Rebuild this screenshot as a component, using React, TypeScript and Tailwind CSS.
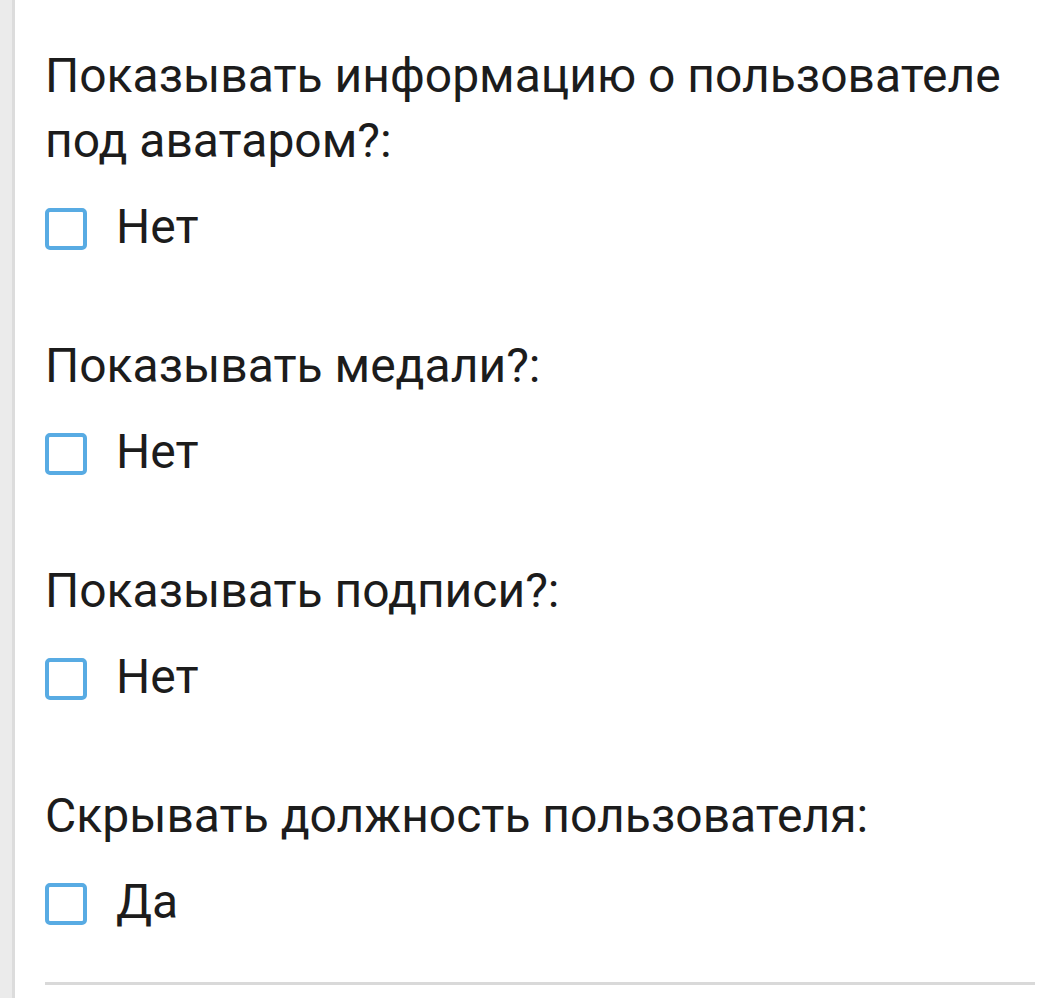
import React from "react";

const Field = ({ title, value, first }: { title: string; value: string; first?: boolean }) => (
  <div className={first ? "" : "mt-[83px]"}>
    <div className="text-[48px] leading-[65px] text-[#1c1c1c]">{title}</div>
    <div className="mt-[35px] flex h-[42px] items-start">
      <span className="box-border h-[42px] w-[42px] shrink-0 rounded-[5px] border-[4px] border-[#58abe3] bg-white" />
      <span className="ml-[29px] text-[48px] leading-[38px] text-[#1c1c1c]">{value}</span>
    </div>
  </div>
);

export default function App() {
  return (
    <div className="flex min-h-[998px] w-full bg-white" style={{ fontFamily: "Roboto, 'Noto Sans', sans-serif" }}>
      <div className="w-[12px] shrink-0 bg-[#ebebeb]" />
      <div className="w-[3px] shrink-0 bg-[#dcdcdc]" />
      <div className="flex-1 pl-[30px] pr-[20px] pt-[43px]">
        <Field first title="Показывать информацию о пользователе под аватаром?:" value="Нет" />
        <Field title="Показывать медали?:" value="Нет" />
        <Field title="Показывать подписи?:" value="Нет" />
        <Field title="Скрывать должность пользователя:" value="Да" />
        <div className="mt-[57px] h-[3px] bg-[#d9d9d9]" />
      </div>
    </div>
  );
}
